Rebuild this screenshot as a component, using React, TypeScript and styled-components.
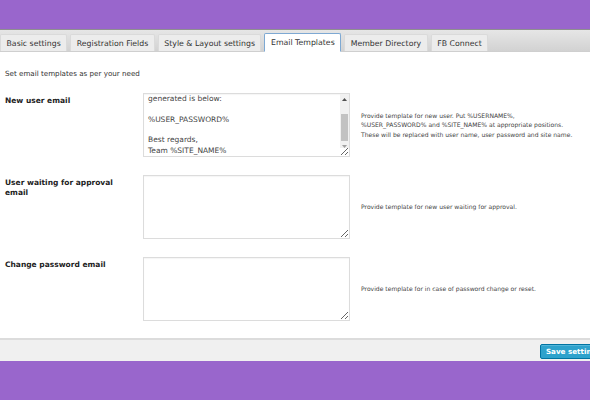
import React, { useEffect, useRef } from "react";
import styled, { createGlobalStyle } from "styled-components";

const Global = createGlobalStyle`
  html, body { margin: 0; padding: 0; background: #9966cc; }
  body { font-family: "DejaVu Sans", Verdana, sans-serif; }
  * { box-sizing: border-box; }
`;

const Page = styled.div`
  width: 590px;
  height: 400px;
  overflow: hidden;
  display: flex;
  flex-direction: column;
  background: #9966cc;
`;

const TopBar = styled.div`
  height: 29px;
  flex: none;
  background: #9966cc;
`;

const TabBar = styled.div`
  height: 23px;
  flex: none;
  display: flex;
  align-items: flex-end;
  gap: 3px;
  border-top: 1px solid #8f8f8f;
  background: linear-gradient(#e6e6e6, #d2d2d2);
  border-bottom: 1px solid #cfcfcf;
`;

const Tab = styled.div<{ $active?: boolean }>`
  height: ${(p) => (p.$active ? "19px" : "17px")};
  margin-bottom: ${(p) => (p.$active ? "-1px" : "0")};
  padding: 0 5.5px;
  display: flex;
  align-items: center;
  font-size: 7.8px;
  color: #333;
  white-space: nowrap;
  background: ${(p) => (p.$active ? "#fff" : "#ececec")};
  border: 1px solid ${(p) => (p.$active ? "#7ea9d3" : "#dadada")};
  border-bottom: ${(p) => (p.$active ? "1px solid #fff" : "none")};
  border-radius: 2px 2px 0 0;
`;

const Content = styled.div`
  flex: none;
  height: 286px;
  background: #fff;
  padding: 17px 5px 0;
  display: flex;
  flex-direction: column;
`;

const Intro = styled.div`
  font-size: 7.15px;
  color: #333;
  line-height: 10px;
  margin-bottom: 14px;
`;

const Rows = styled.div`
  display: flex;
  flex-direction: column;
  gap: 18px;
`;

const Row = styled.div`
  display: grid;
  grid-template-columns: 138px 207px 1fr;
  align-items: start;
`;

const Label = styled.div`
  font-size: 7.5px;
  font-weight: bold;
  color: #222;
  line-height: 10px;
  padding-top: 3px;
  padding-right: 20px;
`;

const AreaWrap = styled.div`
  position: relative;
  width: 207px;
  height: 64px;
`;

const Area = styled.textarea<{ $scroll?: boolean }>`
  display: block;
  width: 207px;
  height: 64px;
  resize: vertical;
  overflow: hidden;
  border: 1px solid #dcdcdc;
  box-shadow: inset 0 1px 1px rgba(0, 0, 0, 0.04);
  padding: 2px ${(p) => (p.$scroll ? "14px" : "4px")} 0 4px;
  margin: 0;
  font-family: "DejaVu Sans", Verdana, sans-serif;
  font-size: 7.5px;
  line-height: 10.3px;
  color: #444;
  outline: none;
`;

const ScrollBar = styled.div`
  position: absolute;
  top: 1px;
  right: 1px;
  bottom: 9px;
  width: 9px;
  background: #f1f1f1;
  display: flex;
  flex-direction: column;
  pointer-events: none;
`;

const ScrollArrow = styled.div`
  height: 11px;
  flex: none;
  display: flex;
  align-items: center;
  justify-content: center;
`;

const ScrollTrack = styled.div`
  flex: 1;
  padding-top: 9px;
`;

const ScrollThumb = styled.div`
  height: 27px;
  margin: 0 1px;
  background: #c2c2c2;
`;

const Help = styled.div`
  align-self: center;
  padding-left: 11px;
  font-size: 6.05px;
  line-height: 9.5px;
  color: #444;
`;

const Footer = styled.div`
  flex: none;
  height: 23px;
  background: #f0f0f0;
  border-top: 2px solid #dcdcdc;
  display: flex;
  align-items: center;
  justify-content: flex-end;
  padding-top: 2px;
`;

const SaveButton = styled.button`
  flex: none;
  margin-right: -17px;
  height: 15px;
  padding: 0 5px;
  background: #2ea2cc;
  border: 1px solid #0074a2;
  border-radius: 2px;
  box-shadow: inset 0 1px 0 rgba(120, 200, 230, 0.5);
  color: #fff;
  font-family: "DejaVu Sans", Verdana, sans-serif;
  font-size: 7.2px;
  font-weight: bold;
  white-space: nowrap;
`;

const newUserTemplate = `Hi %USERNAME%,

Thanks for registering at %SITE_NAME%. Your password that was
generated is below:

%USER_PASSWORD%

Best regards,
Team %SITE_NAME%`;

const tabs = [
  "Basic settings",
  "Registration Fields",
  "Style & Layout settings",
  "Email Templates",
  "Member Directory",
  "FB Connect",
];

type RowData = { label: string; help: React.ReactNode; value: string };

const rows: RowData[] = [
  {
    label: "New user email",
    value: newUserTemplate,
    help: (
      <>
        Provide template for new user. Put %USERNAME%,
        <br />
        %USER_PASSWORD% and %SITE_NAME% at appropriate positions.
        <br />
        These will be replaced with user name, user password and site name.
      </>
    ),
  },
  {
    label: "User waiting for approval email",
    value: "",
    help: "Provide template for new user waiting for approval.",
  },
  {
    label: "Change password email",
    value: "",
    help: "Provide template for in case of password change or reset.",
  },
];

function TemplateArea({ value }: { value: string }) {
  const ref = useRef<HTMLTextAreaElement>(null);
  const scroll = value.length > 0;
  useEffect(() => {
    if (ref.current) ref.current.scrollTop = ref.current.scrollHeight;
  }, []);
  return (
    <AreaWrap>
      <Area ref={ref} defaultValue={value} spellCheck={false} $scroll={scroll} />
      {scroll && (
        <ScrollBar>
          <ScrollArrow>
            <svg width="5" height="3" viewBox="0 0 5 3">
              <path d="M0 3 L2.5 0 L5 3 Z" fill="#505050" />
            </svg>
          </ScrollArrow>
          <ScrollTrack>
            <ScrollThumb />
          </ScrollTrack>
          <ScrollArrow>
            <svg width="5" height="3" viewBox="0 0 5 3">
              <path d="M0 0 L2.5 3 L5 0 Z" fill="#a0a0a0" />
            </svg>
          </ScrollArrow>
        </ScrollBar>
      )}
    </AreaWrap>
  );
}

export default function App() {
  return (
    <Page>
      <Global />
      <TopBar />
      <TabBar>
        {tabs.map((t) => (
          <Tab key={t} $active={t === "Email Templates"}>
            {t}
          </Tab>
        ))}
      </TabBar>
      <Content>
        <Intro>Set email templates as per your need</Intro>
        <Rows>
          {rows.map((r) => (
            <Row key={r.label}>
              <Label>{r.label}</Label>
              <TemplateArea value={r.value} />
              <Help>{r.help}</Help>
            </Row>
          ))}
        </Rows>
      </Content>
      <Footer>
        <SaveButton type="button">Save settings</SaveButton>
      </Footer>
    </Page>
  );
}
